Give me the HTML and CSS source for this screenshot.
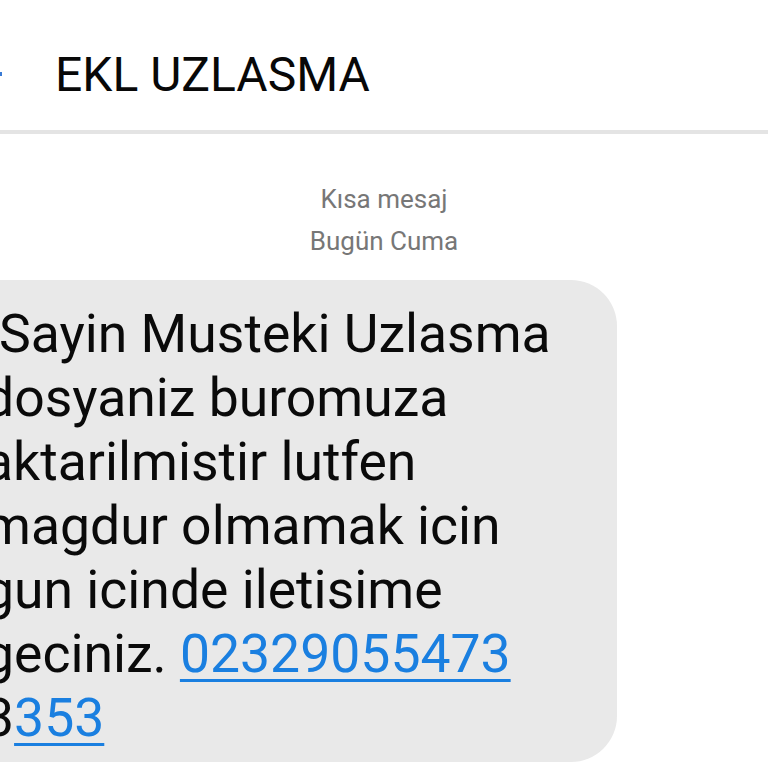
FILE: index.html
```html
<!DOCTYPE html>
<html lang="tr">
<head>
<meta charset="utf-8">
<title>EKL UZLASMA</title>
<link rel="stylesheet" href="styles.css">
</head>
<body>
<header class="topbar">
  <svg class="back" width="40" height="40" viewBox="0 0 40 40"><path d="M36 20H6M18 8L6 20l12 12" fill="none" stroke="#3a7bd5" stroke-width="4"/></svg>
  <h1 class="title">EKL UZLASMA</h1>
</header>
<div class="meta">
  <div class="meta-line">Kısa mesaj</div>
  <div class="meta-line">Bugün Cuma</div>
</div>
<div class="bubble">
  <p class="msg">
    <span class="line first">Sayin Musteki Uzlasma</span>
    <span class="line">dosyaniz buromuza</span>
    <span class="line">aktarilmistir lutfen</span>
    <span class="line">magdur olmamak icin</span>
    <span class="line">gun icinde iletisime</span>
    <span class="line">geciniz. <a class="link" href="#">02329055473</a></span>
    <span class="line">3<a class="link" href="#">353</a></span>
  </p>
</div>
</body>
</html>
```

FILE: styles.css
```css
html, body {
  margin: 0;
  padding: 0;
  background: #ffffff;
  overflow: hidden;
  width: 768px;
  height: 768px;
}
body {
  font-family: Roboto, "Noto Sans", sans-serif;
  color: #0c0c0c;
}
.topbar {
  height: 112px;
  padding-top: 18px;
  display: flex;
  align-items: center;
  border-bottom: 4px solid #e4e4e4;
}
.back {
  margin-left: -34px;
  flex: none;
}
.title {
  margin: 0 0 0 49px;
  font-size: 48px;
  font-weight: 400;
  color: #080808;
}
.meta {
  text-align: center;
  color: #777777;
  font-size: 26px;
  padding-top: 44px;
}
.meta-line {
  line-height: 42px;
}
.bubble {
  margin-top: 18px;
  margin-left: -80px;
  width: 697px;
  height: 482px;
  background: #e9e9e9;
  border-radius: 46px;
}
.msg {
  margin: 0;
  padding: 22px 0 0 0;
  font-size: 53.5px;
  line-height: 64px;
  color: #0a0a0a;
}
.line {
  display: block;
  white-space: nowrap;
  margin-left: 64px;
}
.line.first {
  margin-left: 79px;
}
.link {
  color: #1a7fe0;
  text-decoration: underline;
  text-decoration-thickness: 3px;
  text-underline-offset: 7px;
}
```
